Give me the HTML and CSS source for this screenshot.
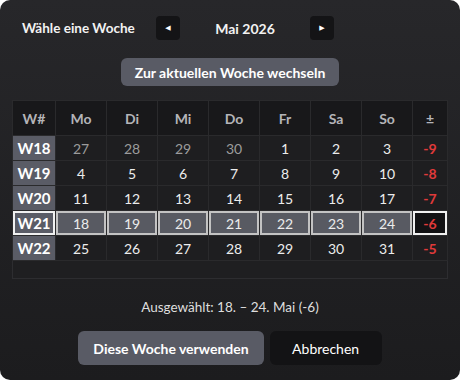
FILE: index.html
```html
<!DOCTYPE html>
<html lang="de">
<head>
<meta charset="utf-8">
<link rel="stylesheet" href="styles.css">
</head>
<body>
<div class="dialog">
  <div class="head">
    <div class="title">Wähle eine Woche</div>
    <div class="nav">
      <button class="navbtn">&#9664;</button>
      <div class="month">Mai 2026</div>
      <button class="navbtn">&#9654;</button>
    </div>
  </div>
  <div class="today-row"><button class="btn btn-gray">Zur aktuellen Woche wechseln</button></div>
  <div class="grid-wrap">
    <table class="cal">
      <colgroup><col class="c-wk"><col><col><col><col><col><col><col><col class="c-pm"></colgroup>
      <thead>
        <tr><th>W#</th><th>Mo</th><th>Di</th><th>Mi</th><th>Do</th><th>Fr</th><th>Sa</th><th>So</th><th>±</th></tr>
      </thead>
      <tbody>
        <tr><td class="wk">W18</td><td class="out">27</td><td class="out">28</td><td class="out">29</td><td class="out">30</td><td>1</td><td>2</td><td>3</td><td class="pm">-9</td></tr>
        <tr><td class="wk">W19</td><td>4</td><td>5</td><td>6</td><td>7</td><td>8</td><td>9</td><td>10</td><td class="pm">-8</td></tr>
        <tr><td class="wk">W20</td><td>11</td><td>12</td><td>13</td><td>14</td><td>15</td><td>16</td><td>17</td><td class="pm">-7</td></tr>
        <tr class="sel"><td class="wk">W21</td><td>18</td><td>19</td><td>20</td><td>21</td><td>22</td><td>23</td><td>24</td><td class="pm">-6</td></tr>
        <tr><td class="wk">W22</td><td>25</td><td>26</td><td>27</td><td>28</td><td>29</td><td>30</td><td>31</td><td class="pm">-5</td></tr>
      </tbody>
    </table>
  </div>
  <div class="summary">Ausgewählt: 18. – 24. Mai (-6)</div>
  <div class="actions">
    <button class="btn btn-gray btn-lg">Diese Woche verwenden</button>
    <button class="btn btn-dark btn-lg">Abbrechen</button>
  </div>
</div>
</body>
</html>
```
FILE: styles.css
```css
html, body {
  margin: 0;
  padding: 0;
  background: #ffffff;
}
body {
  font-family: Lato, "Noto Sans", sans-serif;
  font-size: 14px;
  color: #f2f2f2;
}
.dialog {
  width: 460px;
  height: 380px;
  box-sizing: border-box;
  border-radius: 10px;
  background: linear-gradient(180deg, #27272a 0%, #1c1c1e 100%);
  padding: 16px 12px 0 12px;
  display: flex;
  flex-direction: column;
}
.head {
  display: flex;
  align-items: center;
  height: 24px;
  padding-left: 10px;
}
.title {
  font-weight: 700;
  font-size: 13.5px;
  width: 134px;
}
.nav {
  display: flex;
  align-items: center;
}
.navbtn {
  width: 24px;
  height: 24px;
  border: 0;
  border-radius: 4px;
  background: #141416;
  color: #ffffff;
  font-size: 7px;
  padding: 0;
  display: flex;
  align-items: center;
  justify-content: center;
  font-family: "DejaVu Sans", sans-serif;
}
.month {
  width: 130px;
  text-align: center;
  font-weight: 700;
}
.today-row {
  display: flex;
  justify-content: center;
  margin-top: 18px;
}
.btn {
  border: 0;
  border-radius: 6px;
  font-family: inherit;
  font-size: 14px;
  color: #ffffff;
  cursor: pointer;
}
.btn-gray {
  background: #595b65;
  font-weight: 700;
  height: 28px;
  padding: 0 14px;
}
.btn-dark {
  background: #131315;
  font-weight: 400;
}
.btn-lg {
  height: 34px;
}
.btn-gray.btn-lg { padding: 0 15px; }
.btn-dark.btn-lg { width: 112px; }
.grid-wrap {
  margin-top: 14px;
  height: 179px;
  box-sizing: border-box;
  border: 1px solid #2d2d30;
  background: #1f1f21;
}
.cal {
  border-collapse: separate;
  border-spacing: 1px;
  background: #2a2a2c;
  table-layout: fixed;
  margin: -1px;
  width: calc(100% + 2px);
}
.c-wk { width: 42px; }
.c-pm { width: 34px; }
.cal th {
  height: 34px;
  background: #18181a;
  color: #b4b4b8;
  font-weight: 700;
  font-size: 14px;
  padding: 0;
}
.cal td {
  height: 24px;
  padding: 0;
  text-align: center;
  background: #1e1e20;
  color: #ececec;
  box-sizing: border-box;
}
.cal td.out { color: #9c9c9c; }
.cal td.wk {
  background: #5a5c66;
  color: #ffffff;
  font-weight: 700;
  font-size: 15px;
}
.cal td.pm {
  color: #e03a3a;
  font-weight: 700;
}
.sel td {
  background: #585a62;
  box-shadow: inset 0 0 0 2px #c3c3c3;
}
.sel td.wk {
  box-shadow: inset 0 0 0 2px #f0f0f0;
}
.sel td.pm {
  background: #121214;
  box-shadow: inset 0 0 0 2px #f0f0f0;
}
.summary {
  text-align: center;
  font-size: 13.5px;
  margin-top: 20px;
  color: #dedede;
}
.actions {
  display: flex;
  justify-content: center;
  gap: 6px;
  margin-top: 16px;
}
```
